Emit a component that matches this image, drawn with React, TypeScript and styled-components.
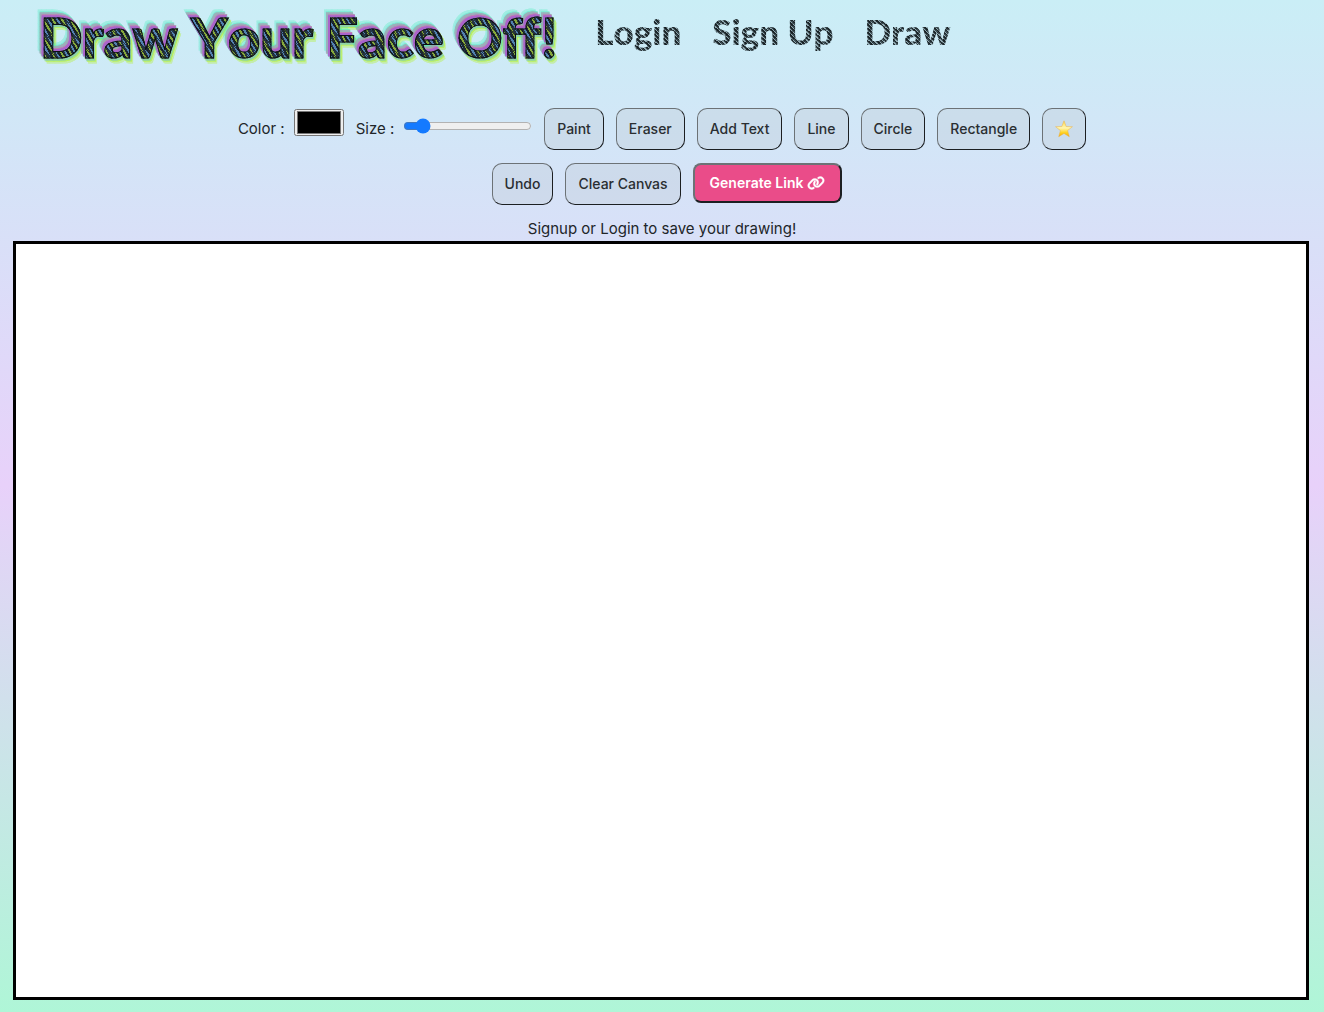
import React, { useState } from "react";
import styled, { createGlobalStyle, css } from "styled-components";

const GlobalStyle = createGlobalStyle`
  * { box-sizing: border-box; }
  body {
    margin: 0;
    min-height: 100vh;
    background: linear-gradient(#caeef6, #e8d1fa 48%, #aff6d7);
    color: #212529;
    font: 400 15px/24px Inter, "Liberation Sans", sans-serif;
  }
`;

const Page = styled.div`
  min-height: 100vh;
  display: flex;
  flex-direction: column;
`;

const Header = styled.header`
  display: flex;
  align-items: flex-start;
  gap: 38px;
  height: 104px;
  padding: 4px 32px 0 40px;
  font-family: Lato, "Liberation Sans", sans-serif;
  font-weight: 900;
  font-kerning: none;
`;

const hatch = css`
  -webkit-background-clip: text;
  background-clip: text;
  color: transparent;
  white-space: nowrap;
  text-decoration: none;
`;

const BrandLink = styled.a`
  ${hatch}
  font-size: 56px;
  line-height: 66px;
  background-image:
    repeating-linear-gradient(48deg, #10161ab0 0 1px, transparent 1px 4px),
    repeating-linear-gradient(62deg, #1c2830 0 2px, #86a83c 2px 4px, #26343e 4px 6px, #5280b0 6px 8px);
  -webkit-text-stroke: 1px #0c1014;
  filter:
    drop-shadow(-2px -2px 0 #9a4fe090)
    drop-shadow(-2px -3px 0 #f04fb4b0)
    drop-shadow(-2px -3px 0 #3cf0b4c0)
    drop-shadow(1px 2px 0 #62b4f080)
    drop-shadow(2px 3px 0 #b4f03cd0);
`;

const Nav = styled.nav`
  display: flex;
  gap: 31px;
`;

const NavLink = styled.a`
  ${hatch}
  font-size: 35px;
  line-height: 54px;
  background-image:
    repeating-linear-gradient(128deg, #0c101470 0 1px, transparent 1px 5px),
    repeating-linear-gradient(42deg, #1c262a 0 1px, #8ea6ae 1px 2px, #3a4a50 2px 3px);
`;

const Toolbar = styled.div`
  display: flex;
  flex-direction: column;
  gap: 5px;
`;

const ToolRow = styled.div<{ $indent?: boolean }>`
  display: flex;
  flex-wrap: wrap;
  justify-content: center;
  gap: 4px 12px;
  padding-left: ${(p) => (p.$indent ? "10px" : "0")};
`;

const Field = styled.label`
  display: flex;
  align-items: center;
  gap: 9px;
  height: 50px;
`;

const ColorInput = styled.input`
  width: 50px;
  height: 27px;
  margin-bottom: 14px;
  &::-webkit-color-swatch-wrapper { padding: 0; }
`;

const SizeInput = styled.input`
  width: 129px;
  margin: 0 0 6px;
  accent-color: #147aff;
`;

const ToolButton = styled.button`
  height: 42px;
  margin: 4px 0;
  padding: 0 12px;
  border: 1px solid;
  border-color: #6c7276 #1c1f22 #1c1f22 #6c7276;
  border-radius: 10px;
  background: rgba(190, 200, 210, 0.3);
  color: #2a2e31;
  font: 500 14px/20px Inter, "Liberation Sans", sans-serif;
`;

const ShareButton = styled(ToolButton)`
  height: 40px;
  display: flex;
  align-items: center;
  gap: 4px;
  padding: 0 15px;
  border-width: 2px;
  border-radius: 8px;
  background: #ea4c89;
  color: #fff;
  font-weight: 600;
`;

const Hint = styled.p`
  margin: 8px 0 0;
  text-align: center;
`;

const Board = styled.canvas`
  display: block;
  flex: 1;
  min-height: 0;
  width: calc(100% - 28px);
  margin: 0 15px 12px 13px;
  border: 3px solid #000;
  background: #fff;
`;

const StarSvg = styled.svg`
  display: block;
`;

const LinkIcon = () => (
  <svg width="18" height="14" viewBox="0 0 640 512" fill="currentColor" aria-hidden="true">
    <path d="M580 267c56-56 56-148 0-204-50-50-130-57-188-16l-2 1c-14 11-18 30-7 45s30 18 44 8l2-1c33-23 77-19 106 9 31 31 31 82 0 113L422 335c-31 32-82 32-113 0-28-28-32-73-9-105l1-2c11-14 7-34-7-44s-34-7-45 7l-1 2c-42 58-35 137 15 188 57 56 148 56 204 0zM60 245c-56 56-56 148 0 204 50 50 130 57 188 16l2-1c14-11 18-30 7-45s-30-18-44-8l-2 1c-33 23-77 19-106-9-31-31-31-82 0-113l113-113c31-32 82-32 113 0 28 28 32 73 9 105l-1 2c-11 14-7 34 7 44s34 7 45-7l1-2c42-58 35-137-15-188-57-56-148-56-204 0z" stroke="currentColor" strokeWidth="14" />
  </svg>
);

const StarIcon = () => (
  <StarSvg width="18" height="18" viewBox="0 0 18 18" aria-hidden="true">
    <defs>
      <linearGradient id="gold" x1="0" y1="0" x2="0" y2="1">
        <stop offset="0" stopColor="#ffd94a" />
        <stop offset="0.45" stopColor="#fff6b0" />
        <stop offset="0.75" stopColor="#ffd21f" />
        <stop offset="1" stopColor="#f5a800" />
      </linearGradient>
    </defs>
    <path d="M9 .8l2.200 5.700 6.200.2-4.800 3.900 1.700 6.100L9 13.400l-5.300 3.300 1.700-6.100L.6 6.700l6.200-.2z" fill="url(#gold)" stroke="#eab04a" strokeWidth=".5" strokeLinejoin="round" />
  </StarSvg>
);

const tools = ["Paint", "Eraser", "Add Text", "Line", "Circle", "Rectangle"];

export default function App() {
  const [color, setColor] = useState("#000000");
  const [size, setSize] = useState(9);
  return (
    <>
      <GlobalStyle />
      <Page>
        <Header>
          <BrandLink href="#home">Draw Your Face Off!</BrandLink>
          <Nav>
            <NavLink href="#login">Login</NavLink>
            <NavLink href="#signup">Sign Up</NavLink>
            <NavLink href="#draw">Draw</NavLink>
          </Nav>
        </Header>
        <Toolbar>
          <ToolRow>
            <Field>Color :<ColorInput type="color" value={color} onChange={(e) => setColor(e.target.value)} /></Field>
            <Field>Size :<SizeInput type="range" min="1" max="80" value={size} onChange={(e) => setSize(Number(e.target.value))} /></Field>
            {tools.map((tool) => <ToolButton key={tool} type="button">{tool}</ToolButton>)}
            <ToolButton type="button" aria-label="Star"><StarIcon /></ToolButton>
          </ToolRow>
          <ToolRow $indent>
            <ToolButton type="button">Undo</ToolButton>
            <ToolButton type="button">Clear Canvas</ToolButton>
            <ShareButton type="button">Generate Link <LinkIcon /></ShareButton>
          </ToolRow>
        </Toolbar>
        <Hint>Signup or Login to save your drawing!</Hint>
        <Board aria-label="Drawing canvas" />
      </Page>
    </>
  );
}
